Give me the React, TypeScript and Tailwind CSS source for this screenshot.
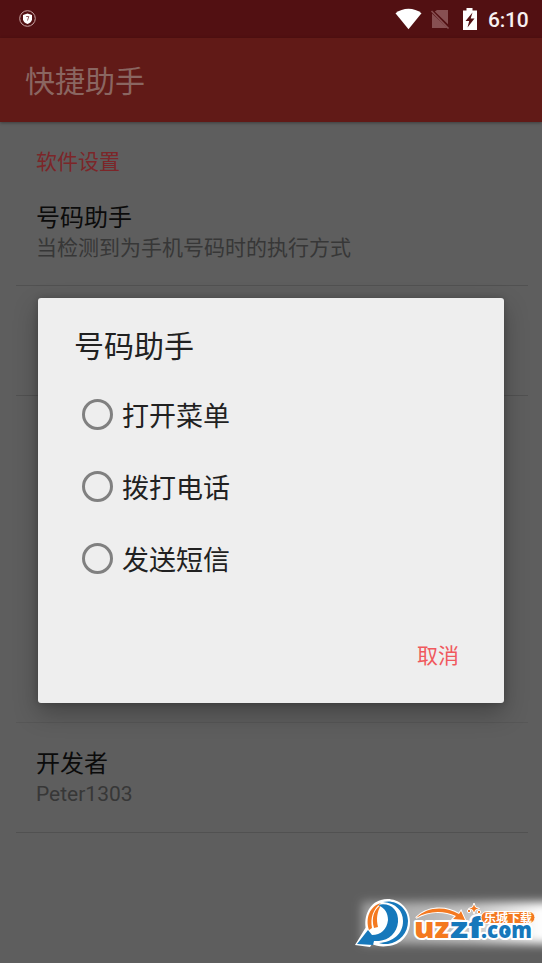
const options = ["打开菜单", "拨打电话", "发送短信"];

function StatusBar() {
  return (
    <div className="flex h-[38px] items-center justify-between bg-[#521012] pl-[19px] pr-3">
      <svg width="18" height="18" viewBox="0 0 18 18">
        <circle cx="8.5" cy="8.5" r="7.8" fill="none" stroke="#c9a5a5" strokeWidth="1" />
        <path d="M8.5 3.6 13 5v4.2c0 2.3-2.2 3.9-4.5 4.8C6.2 13.1 4 11.5 4 9.200V5z" fill="#fff" />
        <path d="M7.200 6.500h2.600l-1.300 4" fill="none" stroke="#8d5a5c" strokeWidth="1" />
      </svg>
      <div className="flex items-center">
        <svg width="27" height="22" viewBox="0 0 28 22">
          <path d="M0.500 5C8-1.300 20-1.300 27.500 5L14 21.500z" fill="#fff" />
        </svg>
        <svg className="ml-2" width="20" height="22" viewBox="0 0 20 22">
          <path d="M7 2h11v14.200L4.800 3.600zM2 5.500 17.500 20H2z" fill="#875052" />
          <path d="M1.500 3 18.500 20.500" stroke="#875052" strokeWidth="1.600" />
        </svg>
        <svg className="ml-3" width="16" height="22" viewBox="0 0 16 22">
          <path d="M4.500 0h6v2.500H15V22H1V2.500h3.500z" fill="#fff" />
          <path d="M10.500 4.500 3.500 13h3.700l-1.700 6.500 7-9H8.700z" fill="#521012" />
        </svg>
        <span className="ml-2.5 w-[42px] whitespace-nowrap pt-0.5 font-[Roboto] text-[21px] font-medium leading-none tracking-[-0.2px] text-[#f8f1f1]">
          6:10
        </span>
      </div>
    </div>
  );
}

function Logo() {
  return (
    <svg className="absolute bottom-0 right-0" width="192" height="73" viewBox="0 0 192 73">
      <defs>
        <filter id="glow" x="-20%" y="-40%" width="140%" height="180%">
          <feGaussianBlur stdDeviation="5" />
        </filter>
        <linearGradient id="haze" x1="0" x2="1">
          <stop offset="0" stopColor="#fff" stopOpacity="0.400" />
          <stop offset="0.550" stopColor="#fff" stopOpacity="0.650" />
          <stop offset="0.900" stopColor="#fff" />
        </linearGradient>
      </defs>
      <rect x="12" y="12" width="200" height="42" fill="url(#haze)" filter="url(#glow)" />
      <path
        d="M17 43C12 28 19 13 31 10c12-4 29 4 29 22 0 13-9 23-22 24-6 1-12 0-16-2l-2 3L5 55l11-18z"
        fill="#fff"
      />
      <path d="M19 40c-4-12 1-24 12-27-8 6-11 15-9 25z" fill="#f47920" />
      <path d="M24 38c-3-10 0-19 7-23-4 7-5 14-3 22z" fill="#f47920" />
      <path
        d="M28 15c12-3 21 5 20 17-1 11-9 18-19 19l-5 0-1 4L7 54l11-14 4 5c9 0 15-6 16-15 0-7-3-12-10-15z"
        fill="#1678bb"
      />
      <path d="M33 12c13-3 25 6 25 19 0 12-8 21-20 23-3 0-7 0-9-1 14-1 24-9 24-22 0-10-7-18-20-19z" fill="#1678bb" />

      <g
        stroke="#fff"
        strokeWidth="4"
        strokeLinejoin="round"
        paintOrder="stroke"
        className="font-['Open_Sans'] font-extrabold"
      >
        <text x="64" y="48" textLength="36" lengthAdjust="spacingAndGlyphs" fill="#f47920" className="text-[28px]">
          uz
        </text>
        <text x="100" y="48" textLength="33" lengthAdjust="spacingAndGlyphs" fill="#1678bb" className="text-[29px]">
          zf
        </text>
        <text x="131" y="48" textLength="51" lengthAdjust="spacingAndGlyphs" fill="#1678bb" className="text-[22px]">
          .com
        </text>
      </g>
      <path
        d="M66 28C77 16 96 16 109 24l2-3 4 9-12-1 3-3C93 20 78 21 66 28z"
        fill="#f47920"
        stroke="#fff"
        strokeWidth="2"
        paintOrder="stroke"
      />
      <circle cx="157" cy="42" r="2" fill="#1678bb" />
      <rect x="131" y="21.500" width="54" height="12" rx="6" fill="#f47920" stroke="#fff" strokeWidth="1" />
      <text
        x="134"
        y="31.500"
        textLength="48"
        lengthAdjust="spacingAndGlyphs"
        fill="#fff"
        className="font-['Noto_Sans_CJK_SC',sans-serif] text-[11px] font-bold"
      >
        乐城下载
      </text>
      <g fill="#f47920" stroke="#fff" strokeWidth="1">
        <path d="m124 13 1.500 4 4 1.500-4 1.500-1.500 4-1.500-4-4-1.500 4-1.500z" />
        <circle cx="119" cy="21" r="1.700" />
        <circle cx="129" cy="22" r="1.700" />
      </g>
    </svg>
  );
}

export default function App() {
  return (
    <div className="relative flex h-[963px] w-[542px] flex-col overflow-hidden bg-[#5e5e5e] font-[Roboto,'Noto_Sans_CJK_SC',sans-serif]">
      <StatusBar />
      <header className="flex h-[84px] shrink-0 items-center bg-[#611a17] pl-[25px] pt-[3px] text-[30px] leading-none text-[#8a6661] shadow-[0_1px_3px_rgba(0,0,0,0.35)]">
        快捷助手
      </header>

      <main className="flex flex-col pl-4 pr-3.5">
        <h2 className="mt-[27px] pl-5 text-[21px] leading-[26px] text-[#7c2629]">软件设置</h2>
        <section className="mt-[27px] h-[84px] border-b border-[#515151] pl-5">
          <h3 className="text-[24px] leading-[32px] text-[#0b0b0b]">号码助手</h3>
          <p className="text-[21px] leading-[29px] text-[#373737]">当检测到为手机号码时的执行方式</p>
        </section>
        <div className="h-[110px] border-b border-[#515151]" />
        <div className="h-[327px] border-b border-[#575757]" />
        <section className="h-[110px] border-b border-[#515151] pl-5 pt-[25px]">
          <h3 className="text-[24px] leading-[32px] text-[#0b0b0b]">开发者</h3>
          <p className="text-[21px] leading-[29px] text-[#373737]">Peter1303</p>
        </section>
      </main>

      <div className="absolute left-[38px] top-[298px] flex h-[405px] w-[466px] flex-col rounded-[3px] bg-[#eeeeee] px-9 pt-[29px] shadow-[0_10px_24px_rgba(0,0,0,0.28),0_0_6px_rgba(0,0,0,0.2)]">
        <h1 className="text-[30px] leading-10 text-[#212121]">号码助手</h1>
        <div className="mt-[11px] flex flex-col pl-2">
          {options.map((label) => (
            <label key={label} className="flex h-[72px] items-center gap-[9px] text-[27px] leading-none text-[#212121]">
              <span className="size-[31px] rounded-full border-3 border-[#808080]" />
              <span className="pt-1.5">{label}</span>
            </label>
          ))}
        </div>
        <button className="mr-[9px] mt-[47px] self-end text-[21px] leading-[30px] text-[#f0595d]">取消</button>
      </div>

      <Logo />
    </div>
  );
}
